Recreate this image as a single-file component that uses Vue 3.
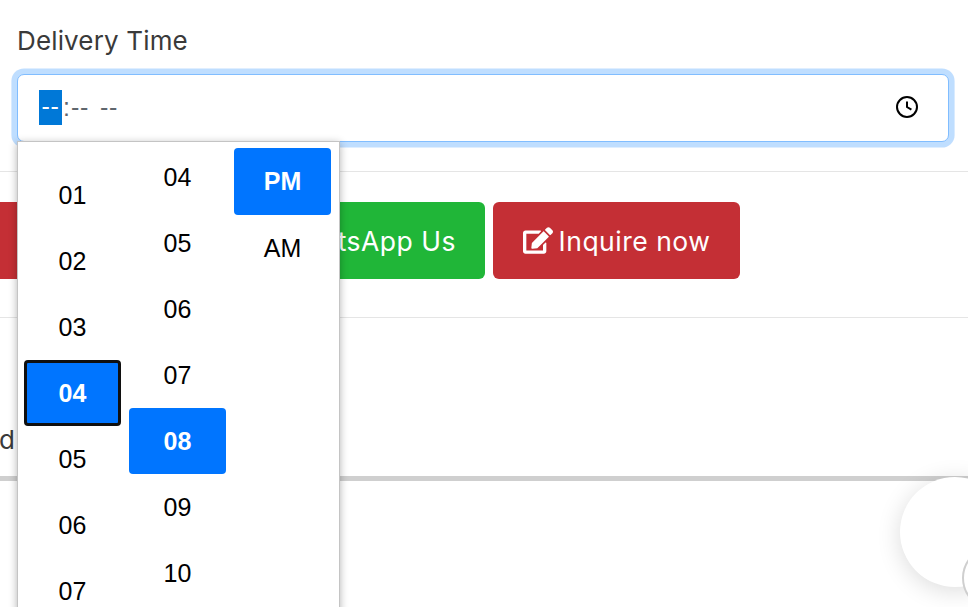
<script setup>
const hours = ['01', '02', '03', '04', '05', '06', '07']
const minutes = ['04', '05', '06', '07', '08', '09', '10']
const meridiem = ['PM', 'AM']
</script>

<template>
  <div class="page">
    <section class="field">
      <label class="label">Delivery Time</label>
      <div class="input">
        <span class="seg selected">--</span><span class="colon">:</span><span class="seg">--</span><span class="seg last">--</span>
        <svg class="clock" viewBox="0 0 24 24" width="24" height="24" fill="none" stroke="#000" stroke-width="2">
          <circle cx="12" cy="12" r="10" />
          <path d="M12 6.5V12l4.4 2.7" />
        </svg>
      </div>
    </section>

    <hr class="rule first" />

    <div class="actions">
      <div class="btn red lead"></div>
      <button class="btn green">WhatsApp Us</button>
      <button class="btn red">
        <svg class="edit" viewBox="0 0 576 512" width="30" height="27" fill="#fff">
          <path d="M402.6 83.2l90.2 90.2c3.8 3.8 3.8 10 0 13.8L274.4 405.6l-92.8 10.3c-12.4 1.4-22.9-9.1-21.5-21.5l10.3-92.8L388.8 83.2c3.8-3.8 10-3.8 13.8 0zm162-22.9l-48.8-48.8c-15.2-15.2-39.9-15.2-55.2 0l-35.4 35.4c-3.8 3.8-3.8 10 0 13.8l90.2 90.2c3.8 3.8 10 3.8 13.8 0l35.4-35.4c15.2-15.3 15.2-40 0-55.2zM384 346.2V448H64V128h229.8c3.2 0 6.2-1.3 8.5-3.5l40-40c7.6-7.6 2.2-20.5-8.5-20.5H48C21.5 64 0 85.5 0 112v352c0 26.5 21.5 48 48 48h352c26.5 0 48-21.5 48-48V306.2c0-10.7-12.9-16-20.5-8.5l-40 40c-2.2 2.3-3.5 5.3-3.5 8.5z" />
        </svg>
        <span>Inquire now</span>
      </button>
    </div>

    <hr class="rule second" />

    <p class="note">d</p>
    <div class="thick"></div>

    <div class="float-circle"><div class="float-inner"></div></div>

    <div class="picker">
      <div class="col hours">
        <div v-for="h in hours" :key="h" class="item" :class="{ on: h === '04', focus: h === '04' }">{{ h }}</div>
      </div>
      <div class="col minutes">
        <div v-for="m in minutes" :key="m" class="item" :class="{ on: m === '08' }">{{ m }}</div>
      </div>
      <div class="col ampm">
        <div v-for="x in meridiem" :key="x" class="item" :class="{ on: x === 'PM' }">{{ x }}</div>
      </div>
    </div>
  </div>
</template>

<style>
html, body { margin: 0; overflow: hidden; background: #fff; }
</style>

<style scoped>
.page {
  position: relative;
  width: 968px;
  height: 607px;
  overflow: hidden;
  background: #fff;
  font-family: Inter, "Open Sans", sans-serif;
  color: #3a3a3a;
}
.field { padding: 24px 19px 0 17px; }
.label { display: block; font-size: 26px; line-height: 33px; height: 50px; letter-spacing: .15px; }
.input {
  height: 67.5px;
  box-sizing: border-box;
  border: 1px solid #80bdff;
  border-radius: 7px;
  box-shadow: 0 0 0 5.6px rgba(0, 123, 255, .25);
  display: flex;
  align-items: center;
  padding: 0 29px 1px 21px;
  color: #5f666d;
  font-size: 25px;
  background: #fff;
}
.seg { flex: none; width: 18px; white-space: nowrap; text-align: center; letter-spacing: .6px; font-family: "Liberation Sans", sans-serif; }
.seg.selected { width: 23px; height: 35px; line-height: 33px; background: #0078d7; color: #fff; }
.colon { flex: none; width: 9px; text-align: center; font-family: "Liberation Sans", sans-serif; }
.seg.last { margin-left: 11px; }
.clock { margin-left: auto; }
.rule { border: 0; border-top: 1px solid #e5e5e5; margin: 0; }
.rule.first { margin-top: 29.5px; }
.actions { display: flex; gap: 8px; margin-top: 30px; margin-left: -40px; }
.btn {
  height: 77px;
  border: 0;
  border-radius: 6px;
  color: #fff;
  font-family: inherit;
  font-size: 26.5px;
  letter-spacing: .5px;
  display: flex;
  align-items: center;
  justify-content: center;
  gap: 6px;
  padding: 0;
}
.btn.red { background: #c42f35; width: 247px; }
.btn.green { background: #20b638; width: 247px; justify-content: flex-end; padding-right: 29px; box-sizing: border-box; }
.btn.lead { width: 270px; }
.edit { flex: none; }
.rule.second { margin-top: 38px; }
.note { margin: 106px 0 0 -1px; font-size: 26px; line-height: 32px; height: 20px; }
.thick { height: 5px; background: #cfcfcf; margin-top: 32px; }
.float-circle {
  position: absolute;
  left: 900px;
  top: 477px;
  width: 110px;
  height: 110px;
  border-radius: 50%;
  background: #fff;
  box-shadow: 0 4px 24px rgba(0, 0, 0, .14);
}
.float-inner {
  position: absolute;
  left: 62px;
  top: 69px;
  width: 60px;
  height: 60px;
  border-radius: 50%;
  border: 2px solid #cfcfcf;
  background: #fff;
}
.picker {
  position: absolute;
  left: 17px;
  top: 141px;
  width: 323px;
  height: 520px;
  box-sizing: border-box;
  background: #fff;
  border: 1px solid #c4c4c4;
  box-shadow: 0 2px 8px rgba(0, 0, 0, .3);
  display: flex;
  gap: 8px;
  padding: 0 7px 0 6px;
  overflow: hidden;
  font-family: "Liberation Sans", Arial, sans-serif;
  font-size: 25px;
  color: #000;
}
.col { width: 97px; flex: none; }
.hours { margin-top: 20px; }
.minutes { margin-top: 2px; }
.ampm { margin-top: 6px; }
.item {
  height: 66px;
  display: flex;
  align-items: center;
  justify-content: center;
  box-sizing: border-box;
  border-radius: 4px;
}
.item.on { background: #0075ff; color: #fff; font-weight: 700; }
.item.focus { border: 3px solid #101010; }
.ampm .on { height: 67px; }
</style>
